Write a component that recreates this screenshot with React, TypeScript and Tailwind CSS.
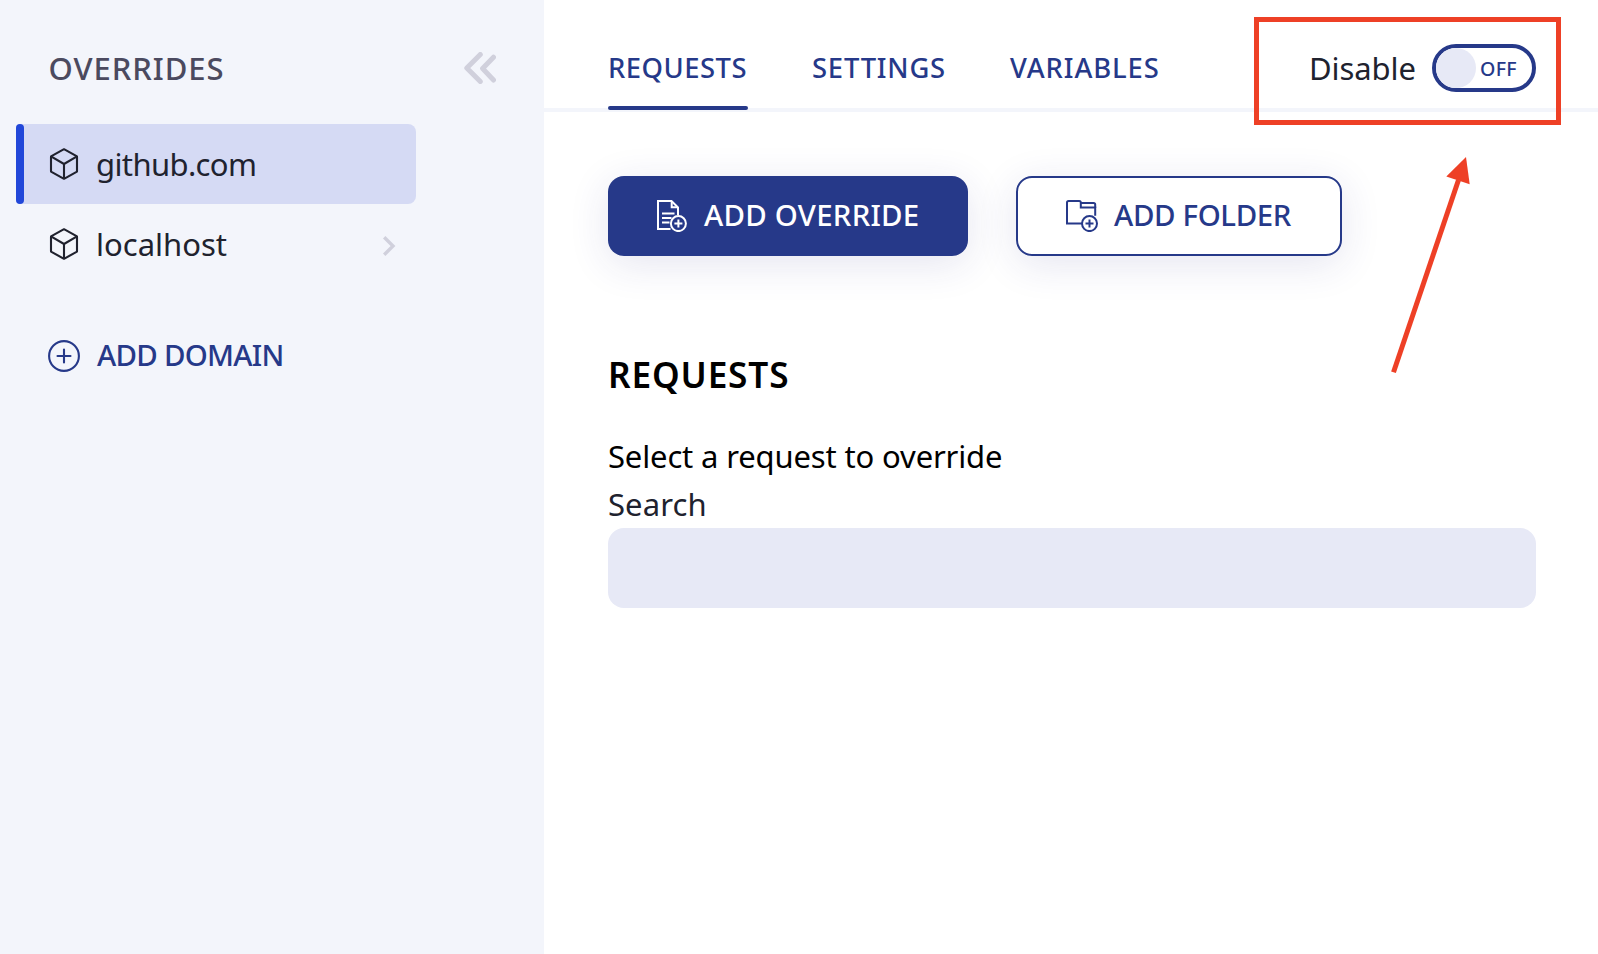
function CubeIcon() {
  return (
    <svg width="32" height="32" viewBox="0 0 32 32" fill="none" stroke="#20222e" strokeWidth="2.1" strokeLinejoin="round" className="block shrink-0">
      <path d="M16 1.2 29 8.4V23.6L16 30.8 3 23.6V8.4Z" />
      <path d="M3 8.4 16 16 29 8.4M16 16V30.8" />
    </svg>
  );
}

function FileAddIcon() {
  return (
    <svg width="32" height="32" viewBox="0 0 32 32" fill="none" stroke="currentColor" strokeWidth="2" className="block shrink-0">
      <path d="M14.5 29H2V1H15.5L22 7.5V15" />
      <path d="M15.7 1V7.3H22" />
      <path d="M6 13.5H18.5M6 18H15.5M6 22.5H13.5" />
      <circle cx="22.4" cy="23.6" r="7.5" />
      <path d="M22.4 19.6V27.6M18.4 23.6H26.4" />
    </svg>
  );
}

function FolderAddIcon() {
  return (
    <svg width="32" height="32" viewBox="0 0 32 32" fill="none" stroke="currentColor" strokeWidth="2" className="block shrink-0">
      <path d="M16 23.6H1V2.6Q1 1 2.6 1H13.2Q14.8 1 14.8 2.6V7.4H29.2V15.8" />
      <path d="M14.8 3H27.6Q29.2 3 29.2 4.6V8" />
      <circle cx="23.5" cy="23.6" r="7.5" />
      <path d="M23.5 19.6V27.6M19.5 23.6H27.5" />
    </svg>
  );
}

function Sidebar() {
  return (
    <aside className="flex w-[544px] shrink-0 flex-col bg-[#f3f5fb] text-[31px]">
      <div className="flex h-[124px] items-start justify-between pt-[44px] pr-[48px] pl-[48.5px]">
        <h1 className="leading-[48px] font-medium tracking-[0.95px] text-[#4b4a5f]">OVERRIDES</h1>
        <svg width="32" height="32" viewBox="0 0 32 32" fill="none" stroke="#d0d0dc" strokeWidth="5" strokeLinecap="round" strokeLinejoin="round" className="mt-2 block">
          <path d="M16.3 2.5 2.8 16 16.3 29.5M29.5 5.2 18.6 16.6 29.5 28" />
        </svg>
      </div>

      <div className="ml-4 flex h-20 w-[400px] items-center rounded-l rounded-r-lg bg-[#d5daf4]">
        <span className="h-20 w-2 shrink-0 rounded bg-[#2147d9]" />
        <span className="ml-6 flex items-center gap-4 text-[#20222e]">
          <CubeIcon />
          <span className="leading-[48px] tracking-[-0.62px]">github.com</span>
        </span>
      </div>

      <div className="ml-4 flex h-20 w-[400px] items-center pr-5 pl-8 text-[#20222e]">
        <CubeIcon />
        <span className="ml-4 grow leading-[48px]">localhost</span>
        <svg width="14" height="20" viewBox="0 0 14 20" fill="none" stroke="#d0d0dc" strokeWidth="3.4" className="mt-1 block">
          <path d="M2.2 1.2 11 10 2.2 18.8" />
        </svg>
      </div>

      <button className="mt-8 ml-12 flex h-20 items-center gap-[17px] self-start text-[29.4px] font-medium text-[#263989]">
        <svg width="32" height="32" viewBox="0 0 32 32" fill="none" stroke="currentColor" strokeWidth="2.1" strokeLinecap="round" className="block">
          <circle cx="16" cy="16" r="14.9" />
          <path d="M16 9.5V22.5M9.5 16H22.5" />
        </svg>
        <span className="-mt-[2px] leading-[48px] tracking-[-0.72px]">ADD DOMAIN</span>
      </button>
    </aside>
  );
}

function Header() {
  return (
    <header className="flex h-28 border-b-4 border-[#f3f5fb] pr-[62px] pl-16">
      <nav className="flex gap-16 text-[27.4px] font-medium text-[#263989]">
        <a className="-mb-[2px] flex h-[110px] w-[140px] flex-col whitespace-nowrap">
          <span className="mt-11 h-[62px] leading-[48px] tracking-[0.5px]">REQUESTS</span>
          <span className="h-1 w-full rounded-full bg-[#263989]" />
        </a>
        <a className="mt-11 w-[134px] leading-[48px] tracking-[0.8px] whitespace-nowrap">SETTINGS</a>
        <a className="mt-11 w-[149px] leading-[48px] tracking-[0.92px] whitespace-nowrap">VARIABLES</a>
      </nav>
      <div className="mt-11 ml-auto flex h-12">
        <span className="mr-4 text-[31px] leading-[48px] tracking-[-0.05px] text-[#20222e]">Disable</span>
        <button className="flex h-12 w-[104px] items-center rounded-full border-4 border-[#263989] bg-white">
          <span className="h-10 w-10 rounded-full bg-[#e7e9f6]" />
          <span className="mt-[2px] ml-1 text-[19.6px] leading-10 font-medium tracking-[0.3px] text-[#263989]">OFF</span>
        </button>
      </div>
    </header>
  );
}

function Callout() {
  return (
    <>
      <div className="pointer-events-none absolute top-[17px] left-[1254px] h-[108px] w-[307px] border-5 border-[#ee4026]" />
      <svg width="90" height="224" viewBox="0 0 90 224" className="pointer-events-none absolute top-[152px] left-[1388px]">
        <path d="M5.5 220.2 70.5 28" stroke="#ee4026" strokeWidth="5" />
        <path d="M78 5 58.3 24.4 81.7 32.3Z" fill="#ee4026" />
      </svg>
    </>
  );
}

export default function App() {
  return (
    <div className="relative flex h-[954px] w-[1598px] overflow-hidden bg-white font-['Noto_Sans',sans-serif]">
      <Sidebar />
      <div className="flex grow flex-col">
        <Header />
        <main className="flex flex-col pt-16 pr-[62px] pl-16">
          <div className="flex gap-12 text-[29.4px] font-medium">
            <button className="flex h-20 w-[360px] items-center rounded-2xl bg-[#263989] pl-12 text-white shadow-[0_8px_40px_rgba(38,40,130,0.12)]">
              <FileAddIcon />
              <span className="-mt-[2px] ml-4 leading-[48px] tracking-[0.25px] whitespace-nowrap">ADD OVERRIDE</span>
            </button>
            <button className="flex h-20 w-[326px] items-center rounded-2xl border-2 border-[#263989] bg-white pl-12 text-[#263989] shadow-[0_8px_40px_rgba(38,40,130,0.12)]">
              <FolderAddIcon />
              <span className="-mt-[2px] ml-4 leading-[48px] tracking-[-0.35px] whitespace-nowrap">ADD FOLDER</span>
            </button>
          </div>
          <h2 className="mt-[92px] text-[35.2px] leading-[52px] font-semibold tracking-[0.85px] text-black">REQUESTS</h2>
          <p className="mt-8 text-[31px] leading-[48px] tracking-[-0.15px] text-black">Select a request to override</p>
          <label className="text-[31px] leading-[48px] tracking-[0.1px] text-[#20222e]" htmlFor="search">Search</label>
          <input id="search" className="h-20 w-full rounded-2xl bg-[#e7e9f6] px-6 text-[31px] outline-none" />
        </main>
      </div>
      <Callout />
    </div>
  );
}
